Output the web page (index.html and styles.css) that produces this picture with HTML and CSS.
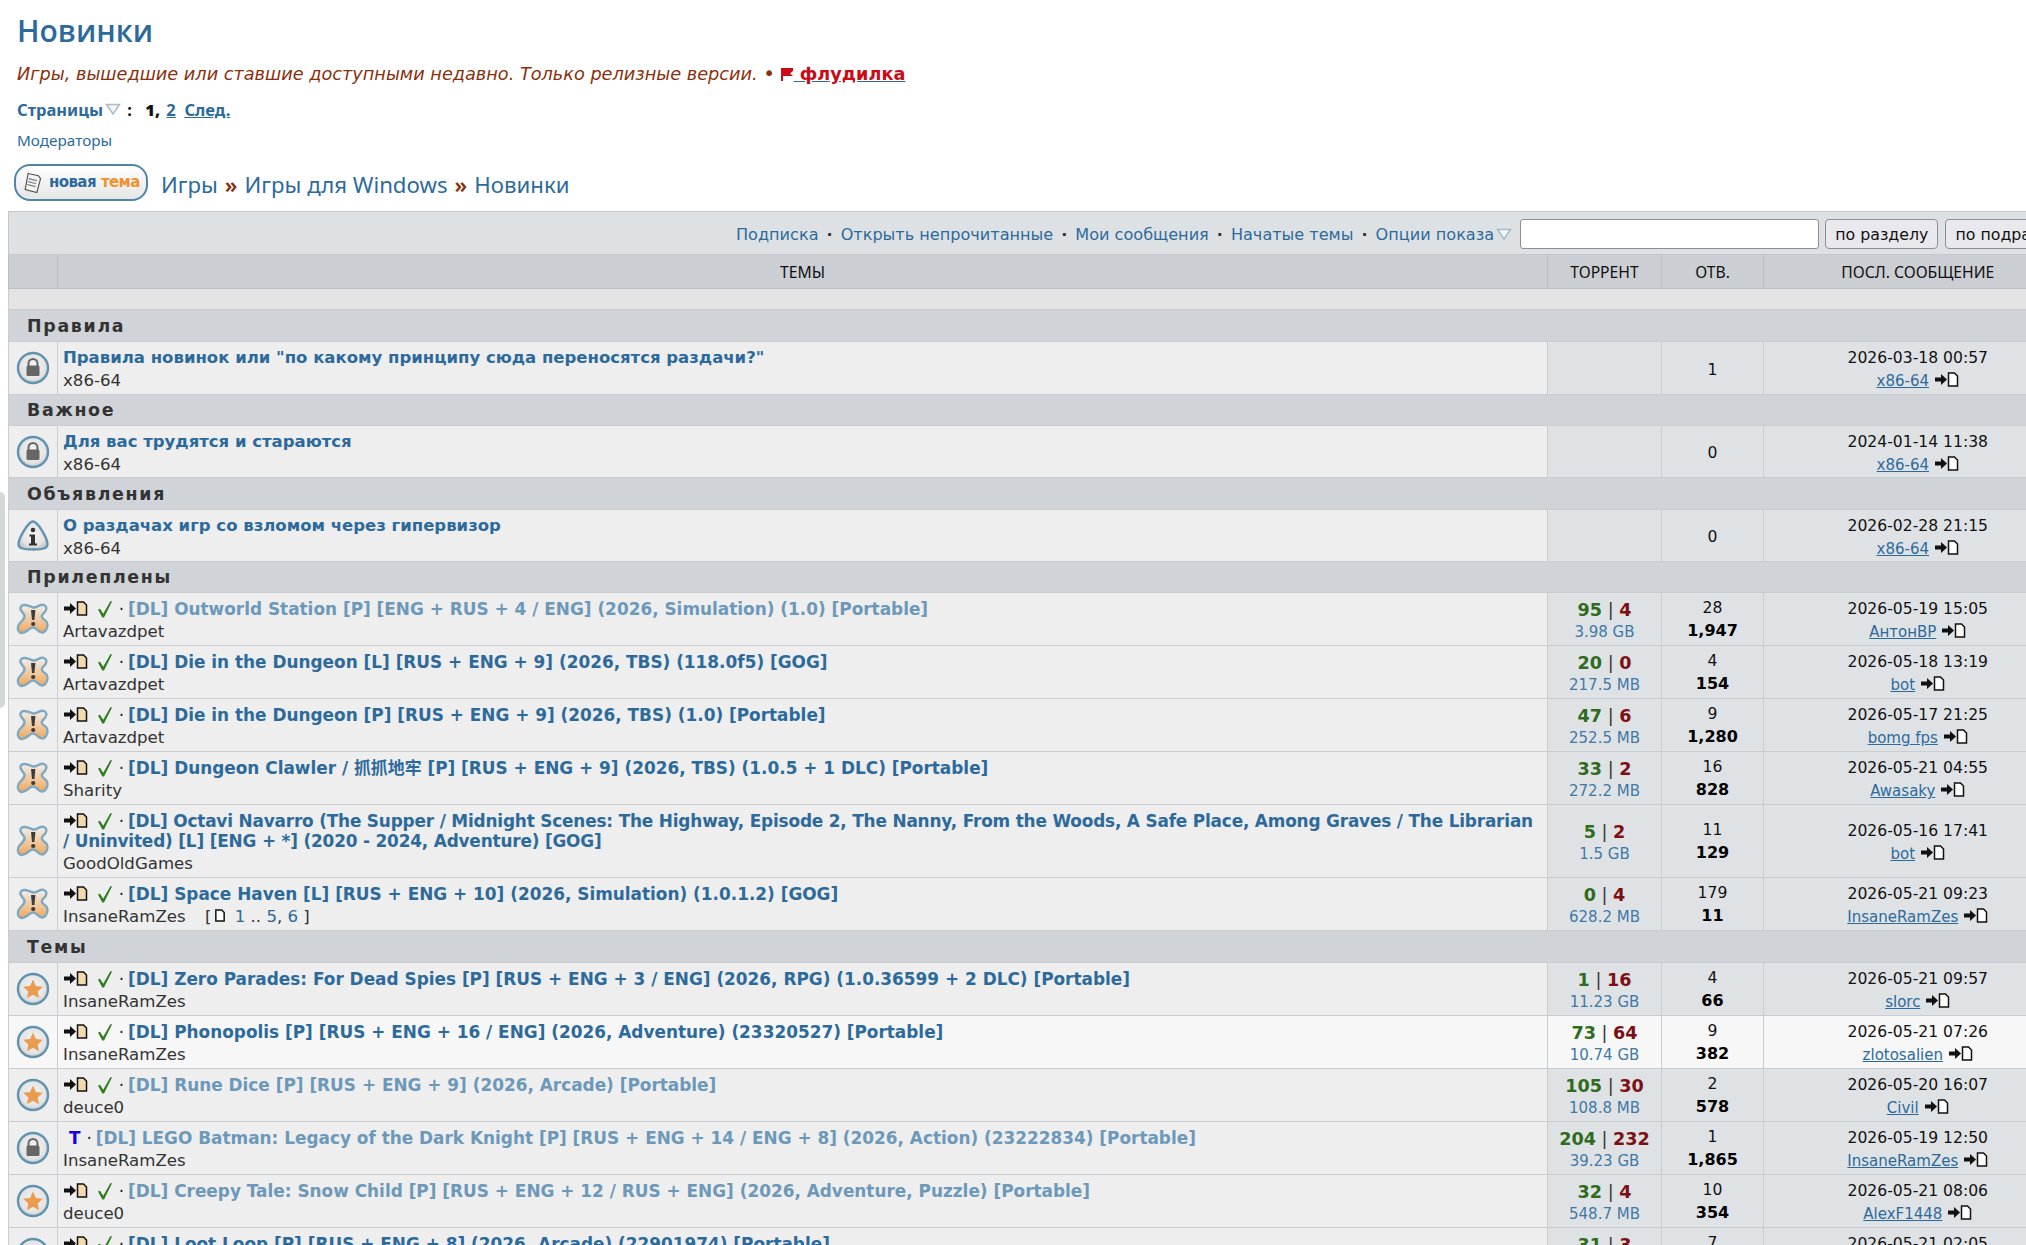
FILE: index.html
```html
<!DOCTYPE html>
<html lang="ru">
<head>
<meta charset="utf-8">
<title>Новинки</title>
<link rel="stylesheet" href="styles.css">
</head>
<body>
<svg class="defs" width="0" height="0" aria-hidden="true">
  <defs>
    <radialGradient id="disc" cx="50%" cy="45%" r="55%"><stop offset="0" stop-color="#f4f4f4"/><stop offset="0.75" stop-color="#e4e4e4"/><stop offset="1" stop-color="#c9c9c9"/></radialGradient>
    <linearGradient id="blob" x1="0" y1="0" x2="0" y2="1"><stop offset="0" stop-color="#f1efec"/><stop offset="1" stop-color="#f0a75a"/></linearGradient>
    <symbol id="i-lock" viewBox="0 0 34 34"><circle cx="17" cy="17" r="15" fill="url(#disc)" stroke="#5f93b0" stroke-width="2.4"/><path d="M12.5 15v-2.5a4.5 4.5 0 0 1 9 0V15" fill="none" stroke="#666" stroke-width="2"/><rect x="10.5" y="14.5" width="13" height="10.5" rx="1.5" fill="#666"/></symbol>
    <symbol id="i-star" viewBox="0 0 34 34"><circle cx="17" cy="17" r="15" fill="url(#disc)" stroke="#5f93b0" stroke-width="2.4"/><path d="M17 7.500l2.900 6.400 6.900.8-5.100 4.700 1.400 6.900-6.100-3.500-6.100 3.500 1.400-6.900-5.100-4.700 6.900-.8z" fill="#e99c4f"/></symbol>
    <symbol id="i-info" viewBox="0 0 34 34"><path d="M17 2.500C22 2.500 31.500 20 31.500 25c0 4-3.500 5.500-14.500 5.500S2.500 29 2.500 25C2.500 20 12 2.500 17 2.500z" fill="url(#disc)" stroke="#5f93b0" stroke-width="2.400"/><circle cx="17" cy="11" r="2.300" fill="#333"/><path d="M13.500 15.500h5.500v9h2v2h-8v-2h2v-7h-1.500z" fill="#333"/></symbol>
    <symbol id="i-sticky" viewBox="0 0 34 34"><path d="M6 3.500C9 1.500 13 4.500 17 5.500c4 .5 7-4 11-2.500 4 2 2.500 6-1 9-2.500 2-.5 5 3 7 3 3 1 10.500-3.500 11.500-4 .5-5.500-5-9.500-5s-6 5.500-11 5.500c-4 0-5.500-5.500-2.500-9.500 3-3 6.500-6 4.500-9C6.500 10 2 6.500 6 3.500z" fill="url(#blob)" stroke="#7fa9c2" stroke-width="2.400"/><path d="M15 8h4.400l-1 10h-2.400z" fill="#3c3c3c"/><circle cx="17.200" cy="22" r="2.100" fill="#3c3c3c"/></symbol>
    <symbol id="i-last" viewBox="0 0 25 15"><path d="M1 5.500h6V2l6 5.500-6 5.500V9.500H1z" fill="#111"/><path d="M14.500 1h6l3 3v10h-9z" fill="#fff" stroke="#111" stroke-width="1.500"/></symbol>
    <symbol id="i-new" viewBox="0 0 25 15"><path d="M1 5.500h6V2l6 5.500-6 5.500V9.500H1z" fill="#111"/><path d="M14.500 1h6l3 3v10h-9z" fill="#f3d9ae" stroke="#111" stroke-width="1.500"/></symbol>
    <symbol id="i-check" viewBox="0 0 16 18"><path d="M1 9.500l2-.8 3.200 5L13.500 1l1.500.5L7 17.500H5.300z" fill="#2f7d1f"/></symbol>
    <symbol id="i-drop" viewBox="0 0 16 12"><path d="M1.500 1.500h13L8 11z" fill="#f4f8fb" stroke="#a5bbca" stroke-width="1.500"/></symbol>
    <symbol id="i-doc" viewBox="0 0 12 15"><path d="M1 1h7l3 3v10H1z" fill="#fff" stroke="#111" stroke-width="1.800"/></symbol>
    <symbol id="i-note" viewBox="0 0 26 30"><path d="M7 2l14 3 3 4-5 19-16-4z" fill="#f2f2f2" stroke="#555" stroke-width="1.600"/><path d="M8 9l11 3M7 13l11 3M6 17l11 3" stroke="#777" stroke-width="1.600"/></symbol>
    <symbol id="i-flag" viewBox="0 0 12 13"><path d="M0 0h2v13H0zM2 0h10v3l-3 2.500L12 8H2z" fill="#cc0a16"/></symbol>
  </defs>
</svg>

<div class="side-handle"></div>

<header class="top">
  <h1 class="page-title">Новинки</h1>
  <p class="subtitle">Игры, вышедшие или ставшие доступными недавно. Только релизные версии. <span class="dot">•</span> <a class="flood" href="#"><svg class="flag"><use href="#i-flag"/></svg> флудилка</a></p>
  <p class="pages"><span class="pages-label">Страницы</span><svg class="drop"><use href="#i-drop"/></svg> : <b class="cur">1,</b> <a href="#">2</a> &nbsp;<a href="#">След.</a></p>
  <p class="mods"><a href="#">Модераторы</a></p>
  <div class="crumbs">
    <a class="new-topic" href="#"><svg class="note"><use href="#i-note"/></svg><span class="nt-a">новая</span><span class="nt-b">тема</span></a>
    <span class="path"><a href="#">Игры</a><span class="sep">»</span><a href="#">Игры для Windows</a><span class="sep">»</span><a href="#">Новинки</a></span>
  </div>
</header>

<table class="forum">
  <colgroup><col class="c-icon"><col class="c-title"><col class="c-tor"><col class="c-rep"><col class="c-last"></colgroup>
  <thead>
    <tr><td colspan="5" class="toolbar"><div class="tools">
      <a href="#">Подписка</a><i>·</i><a href="#">Открыть непрочитанные</a><i>·</i><a href="#">Мои сообщения</a><i>·</i><a href="#">Начатые темы</a><i>·</i><a href="#">Опции показа</a><svg class="drop"><use href="#i-drop"/></svg>
      <input class="q" type="text" aria-label="Поиск"><button>по разделу</button><button>по подразделу</button>
    </div></td></tr>
    <tr class="heads"><th></th><th>ТЕМЫ</th><th>ТОРРЕНТ</th><th>ОТВ.</th><th>ПОСЛ. СООБЩЕНИЕ</th></tr>
    <tr class="gap"><td colspan="5"></td></tr>
  </thead>
  <tbody>
    <tr class="sect tall"><td colspan="5">Правила</td></tr>
    <tr><td class="ic"><svg class="ico"><use href="#i-lock"/></svg></td><td class="tt"><div class="name ru"><a href="#">Правила новинок или "по какому принципу сюда переносятся раздачи?"</a></div><div class="who">x86-64</div></td><td class="tor"></td><td class="rep"><span>1</span></td><td class="last"><div>2026-03-18 00:57</div><div><a href="#">x86-64</a> <svg class="gl"><use href="#i-last"/></svg></div></td></tr>
    <tr class="sect"><td colspan="5">Важное</td></tr>
    <tr class="short"><td class="ic"><svg class="ico"><use href="#i-lock"/></svg></td><td class="tt"><div class="name ru"><a href="#">Для вас трудятся и стараются</a></div><div class="who">x86-64</div></td><td class="tor"></td><td class="rep"><span>0</span></td><td class="last"><div>2024-01-14 11:38</div><div><a href="#">x86-64</a> <svg class="gl"><use href="#i-last"/></svg></div></td></tr>
    <tr class="sect tall"><td colspan="5">Объявления</td></tr>
    <tr class="short"><td class="ic"><svg class="ico"><use href="#i-info"/></svg></td><td class="tt"><div class="name ru"><a href="#">О раздачах игр со взломом через гипервизор</a></div><div class="who">x86-64</div></td><td class="tor"></td><td class="rep"><span>0</span></td><td class="last"><div>2026-02-28 21:15</div><div><a href="#">x86-64</a> <svg class="gl"><use href="#i-last"/></svg></div></td></tr>
    <tr class="sect"><td colspan="5">Прилеплены</td></tr>
    <tr><td class="ic"><svg class="ico"><use href="#i-sticky"/></svg></td><td class="tt"><div class="name"><svg class="gl"><use href="#i-new"/></svg> <svg class="ok"><use href="#i-check"/></svg> <i>·</i> <a class="seen" href="#">[DL] Outworld Station [P] [ENG + RUS + 4 / ENG] (2026, Simulation) (1.0) [Portable]</a></div><div class="who">Artavazdpet</div></td><td class="tor"><div><b class="s">95</b> | <b class="l">4</b></div><div class="sz">3.98 GB</div></td><td class="rep"><span>28</span><b>1,947</b></td><td class="last"><div>2026-05-19 15:05</div><div><a href="#">АнтонВР</a> <svg class="gl"><use href="#i-last"/></svg></div></td></tr>
    <tr><td class="ic"><svg class="ico"><use href="#i-sticky"/></svg></td><td class="tt"><div class="name"><svg class="gl"><use href="#i-new"/></svg> <svg class="ok"><use href="#i-check"/></svg> <i>·</i> <a href="#">[DL] Die in the Dungeon [L] [RUS + ENG + 9] (2026, TBS) (118.0f5) [GOG]</a></div><div class="who">Artavazdpet</div></td><td class="tor"><div><b class="s">20</b> | <b class="l">0</b></div><div class="sz">217.5 MB</div></td><td class="rep"><span>4</span><b>154</b></td><td class="last"><div>2026-05-18 13:19</div><div><a href="#">bot</a> <svg class="gl"><use href="#i-last"/></svg></div></td></tr>
    <tr><td class="ic"><svg class="ico"><use href="#i-sticky"/></svg></td><td class="tt"><div class="name"><svg class="gl"><use href="#i-new"/></svg> <svg class="ok"><use href="#i-check"/></svg> <i>·</i> <a href="#">[DL] Die in the Dungeon [P] [RUS + ENG + 9] (2026, TBS) (1.0) [Portable]</a></div><div class="who">Artavazdpet</div></td><td class="tor"><div><b class="s">47</b> | <b class="l">6</b></div><div class="sz">252.5 MB</div></td><td class="rep"><span>9</span><b>1,280</b></td><td class="last"><div>2026-05-17 21:25</div><div><a href="#">bomg fps</a> <svg class="gl"><use href="#i-last"/></svg></div></td></tr>
    <tr><td class="ic"><svg class="ico"><use href="#i-sticky"/></svg></td><td class="tt"><div class="name"><svg class="gl"><use href="#i-new"/></svg> <svg class="ok"><use href="#i-check"/></svg> <i>·</i> <a href="#">[DL] Dungeon Clawler / 抓抓地牢 [P] [RUS + ENG + 9] (2026, TBS) (1.0.5 + 1 DLC) [Portable]</a></div><div class="who">Sharity</div></td><td class="tor"><div><b class="s">33</b> | <b class="l">2</b></div><div class="sz">272.2 MB</div></td><td class="rep"><span>16</span><b>828</b></td><td class="last"><div>2026-05-21 04:55</div><div><a href="#">Awasaky</a> <svg class="gl"><use href="#i-last"/></svg></div></td></tr>
    <tr><td class="ic"><svg class="ico"><use href="#i-sticky"/></svg></td><td class="tt"><div class="name"><svg class="gl"><use href="#i-new"/></svg> <svg class="ok"><use href="#i-check"/></svg> <i>·</i> <a class="tight" href="#">[DL] Octavi Navarro (The Supper / Midnight Scenes: The Highway, Episode 2, The Nanny, From the Woods, A Safe Place, Among Graves / The Librarian / Uninvited) [L] [ENG + *] (2020 - 2024, Adventure) [GOG]</a></div><div class="who">GoodOldGames</div></td><td class="tor"><div><b class="s">5</b> | <b class="l">2</b></div><div class="sz">1.5 GB</div></td><td class="rep"><span>11</span><b>129</b></td><td class="last"><div>2026-05-16 17:41</div><div><a href="#">bot</a> <svg class="gl"><use href="#i-last"/></svg></div></td></tr>
    <tr><td class="ic"><svg class="ico"><use href="#i-sticky"/></svg></td><td class="tt"><div class="name"><svg class="gl"><use href="#i-new"/></svg> <svg class="ok"><use href="#i-check"/></svg> <i>·</i> <a href="#">[DL] Space Haven [L] [RUS + ENG + 10] (2026, Simulation) (1.0.1.2) [GOG]</a></div><div class="who">InsaneRamZes <span class="tp">[<svg class="dc"><use href="#i-doc"/></svg> <a href="#">1</a> .. <a href="#">5</a>, <a href="#">6</a> ]</span></div></td><td class="tor"><div><b class="s">0</b> | <b class="l">4</b></div><div class="sz">628.2 MB</div></td><td class="rep"><span>179</span><b>11</b></td><td class="last"><div>2026-05-21 09:23</div><div><a href="#">InsaneRamZes</a> <svg class="gl"><use href="#i-last"/></svg></div></td></tr>
    <tr class="sect tall"><td colspan="5">Темы</td></tr>
    <tr><td class="ic"><svg class="ico"><use href="#i-star"/></svg></td><td class="tt"><div class="name"><svg class="gl"><use href="#i-new"/></svg> <svg class="ok"><use href="#i-check"/></svg> <i>·</i> <a href="#">[DL] Zero Parades: For Dead Spies [P] [RUS + ENG + 3 / ENG] (2026, RPG) (1.0.36599 + 2 DLC) [Portable]</a></div><div class="who">InsaneRamZes</div></td><td class="tor"><div><b class="s">1</b> | <b class="l">16</b></div><div class="sz">11.23 GB</div></td><td class="rep"><span>4</span><b>66</b></td><td class="last"><div>2026-05-21 09:57</div><div><a href="#">slorc</a> <svg class="gl"><use href="#i-last"/></svg></div></td></tr>
    <tr class="lit"><td class="ic"><svg class="ico"><use href="#i-star"/></svg></td><td class="tt"><div class="name"><svg class="gl"><use href="#i-new"/></svg> <svg class="ok"><use href="#i-check"/></svg> <i>·</i> <a href="#">[DL] Phonopolis [P] [RUS + ENG + 16 / ENG] (2026, Adventure) (23320527) [Portable]</a></div><div class="who">InsaneRamZes</div></td><td class="tor"><div><b class="s">73</b> | <b class="l">64</b></div><div class="sz">10.74 GB</div></td><td class="rep"><span>9</span><b>382</b></td><td class="last"><div>2026-05-21 07:26</div><div><a href="#">zlotosalien</a> <svg class="gl"><use href="#i-last"/></svg></div></td></tr>
    <tr><td class="ic"><svg class="ico"><use href="#i-star"/></svg></td><td class="tt"><div class="name"><svg class="gl"><use href="#i-new"/></svg> <svg class="ok"><use href="#i-check"/></svg> <i>·</i> <a class="seen" href="#">[DL] Rune Dice [P] [RUS + ENG + 9] (2026, Arcade) [Portable]</a></div><div class="who">deuce0</div></td><td class="tor"><div><b class="s">105</b> | <b class="l">30</b></div><div class="sz">108.8 MB</div></td><td class="rep"><span>2</span><b>578</b></td><td class="last"><div>2026-05-20 16:07</div><div><a href="#">Civil</a> <svg class="gl"><use href="#i-last"/></svg></div></td></tr>
    <tr><td class="ic"><svg class="ico"><use href="#i-lock"/></svg></td><td class="tt"><div class="name"><b class="tm">T</b> <i>·</i> <a class="seen" href="#">[DL] LEGO Batman: Legacy of the Dark Knight [P] [RUS + ENG + 14 / ENG + 8] (2026, Action) (23222834) [Portable]</a></div><div class="who">InsaneRamZes</div></td><td class="tor"><div><b class="s">204</b> | <b class="l">232</b></div><div class="sz">39.23 GB</div></td><td class="rep"><span>1</span><b>1,865</b></td><td class="last"><div>2026-05-19 12:50</div><div><a href="#">InsaneRamZes</a> <svg class="gl"><use href="#i-last"/></svg></div></td></tr>
    <tr><td class="ic"><svg class="ico"><use href="#i-star"/></svg></td><td class="tt"><div class="name"><svg class="gl"><use href="#i-new"/></svg> <svg class="ok"><use href="#i-check"/></svg> <i>·</i> <a class="seen" href="#">[DL] Creepy Tale: Snow Child [P] [RUS + ENG + 12 / RUS + ENG] (2026, Adventure, Puzzle) [Portable]</a></div><div class="who">deuce0</div></td><td class="tor"><div><b class="s">32</b> | <b class="l">4</b></div><div class="sz">548.7 MB</div></td><td class="rep"><span>10</span><b>354</b></td><td class="last"><div>2026-05-21 08:06</div><div><a href="#">AlexF1448</a> <svg class="gl"><use href="#i-last"/></svg></div></td></tr>
    <tr><td class="ic"><svg class="ico"><use href="#i-star"/></svg></td><td class="tt"><div class="name"><svg class="gl"><use href="#i-new"/></svg> <svg class="ok"><use href="#i-check"/></svg> <i>·</i> <a href="#">[DL] Loot Loop [P] [RUS + ENG + 8] (2026, Arcade) (22901974) [Portable]</a></div><div class="who">&nbsp;</div></td><td class="tor"><div><b class="s">31</b> | <b class="l">3</b></div><div class="sz">&nbsp;</div></td><td class="rep"><span>7</span><b>&nbsp;</b></td><td class="last"><div>2026-05-21 02:05</div><div>&nbsp;</div></td></tr>
  </tbody>
</table>
</body>
</html>
```

FILE: styles.css
```css
html, body { margin: 0; height: 100%; overflow: hidden; background: #fff; }
body { font-family: "DejaVu Sans", Verdana, "Noto Sans CJK SC", sans-serif; font-size: 14px; color: #222; }
a { color: #2d6a9c; }
.defs { position: absolute; }

.side-handle { position: absolute; left: 0; top: 492px; width: 5px; height: 216px; background: #d3d8db; border-radius: 0 6px 6px 0; }

.top { padding: 0 0 0 17px; height: 211px; box-sizing: border-box; }
.page-title { margin: 0; padding-top: 10px; font: 600 30px/42px "Open Sans", sans-serif; color: #2d6a9c; }
.subtitle { margin: 11px 0 0; font-size: 17.700px; line-height: 22px; font-style: italic; color: #8a2f0b; }
.dot { font-style: normal; font-size: 20px; line-height: 1; color: #8a2f0b; }
.flood { color: #cc0a16; font-weight: 700; font-style: normal; text-decoration-color: #2d6a9c; }
.flag { width: 12px; height: 13px; margin-right: 1px; vertical-align: -1px; }
.pages { margin: 15px 0 0; font: 700 16.500px/20px "Noto Sans", sans-serif; color: #111; }
.pages-label { color: #2d6a9c; }
.pages a { color: #2d6a9c; }
.pages .drop { margin: 0 2px; }
.cur { margin-left: 9px; margin-right: 2px; }
.drop { flex: none; width: 16px; height: 12px; vertical-align: 1px; }
.mods { margin: 10px 0 0; font: 400 15.300px/20px "Noto Sans", sans-serif; }
.mods a { text-decoration: none; }
.crumbs { display: flex; align-items: flex-start; margin: 14px 0 0 -3px; font: 400 22.200px/30px "Noto Sans", sans-serif; }
.crumbs a { text-decoration: none; color: #2d6a9c; }
.path { display: block; margin-top: 6px; }
.sep { margin: 0 7px; color: #8a2f0b; font-weight: 600; }
.crumbs .new-topic { display: flex; align-items: center; flex: none; box-sizing: border-box; width: 134px; height: 37px; margin-right: 13px; padding-left: 7px; border: 2px solid #4d86a8; border-radius: 16px; background: linear-gradient(#fff, #e6e6e6); font: 700 15px/1 "DejaVu Sans", sans-serif; letter-spacing: -0.6px; }
.note { flex: none; width: 19px; height: 24px; margin-right: 7px; }
.nt-a { color: #2d6a9c; margin-right: 5px; }
.nt-b { color: #ee9230; }

.forum { table-layout: fixed; width: 2063px; margin-left: 8px; border-collapse: collapse; }
.c-icon { width: 49px; }
.c-title { width: 1490px; }
.c-tor { width: 114px; }
.c-rep { width: 102px; }
.c-last { width: 308px; }
.forum td, .forum th { padding: 0; border: 1px solid #c9cdd2; border-right: 0; }

.toolbar { height: 42px; background: #dee1e4; }
.tools { display: flex; align-items: center; padding: 2px 0 0 727px; white-space: nowrap; font-size: 16.100px; color: #333; }
.tools a { text-decoration: none; }
.tools i { margin: 0 8px; font-style: normal; font-weight: 700; }
.tools .drop { margin-left: 2px; }
.q { flex: none; box-sizing: border-box; width: 299px; height: 30px; margin: 0 6px 0 8px; border: 1px solid #8e8e96; border-radius: 3px; background: #fff; }
button { flex: none; box-sizing: border-box; height: 30px; margin-right: 7px; padding: 0 9px; border: 1px solid #8e8e96; border-radius: 4px; background: #e9e9ed; font: 400 15.800px "DejaVu Sans", sans-serif; color: #111; }

.forum .heads th { height: 32px; padding-top: 1px; border-color: #b9bfc5; background: #cbced3; font: 400 15.700px "Noto Sans", sans-serif; color: #111; }
.forum .toolbar { border-color: #c4c8cd; }
.gap td { height: 20px; background: #e4e4e4; }
.forum .sect td { height: 30px; padding-left: 18px; background: #d0d3d8; font-size: 17.400px; font-weight: 700; letter-spacing: 1.700px; color: #333; }
.forum .sect.tall td { height: 31px; }

.ic, .tt { background: #eee; }
.ic { text-align: center; vertical-align: middle; }
.ico { display: block; width: 34px; height: 34px; margin: 0 auto; }
.forum .tt { padding: 6px 7px 0 5px; vertical-align: top; }
.name { font-size: 16.900px; line-height: 20px; font-weight: 700; color: #222; }
.name.ru { font-size: 16.500px; }
.name a { color: #2d6a9c; text-decoration: none; }
.name a.seen { color: #6c98ba; }
.name a.tight { letter-spacing: -0.18px; }
.name i { margin-right: -2px; font-style: normal; font-weight: 400; }
.who { margin-top: 1px; height: 25px; font-size: 16.600px; line-height: 24px; color: #333; }
.short .who { height: 24px; }
.tp { margin-left: 14px; }
.tp a { text-decoration: none; }
.gl { width: 25px; height: 15px; vertical-align: -1px; }
.ok { width: 16px; height: 18px; margin-left: 3px; vertical-align: -3px; }
.dc { width: 10px; height: 13px; vertical-align: 0; margin: 0 4px 0 4px; }
.tm { color: #1a00e0; margin-left: 6px; }

.tor, .rep, .last { background: #dfe2e5; text-align: center; vertical-align: middle; }
.forum .tor, .forum .last { padding-top: 4px; }
.forum .rep { padding-top: 3px; }
.tor { line-height: 22px; font-size: 17.600px; color: #333; }
.tor .s { color: #2f6b1c; }
.tor .l { color: #7c0f14; }
.sz { font-size: 15px; line-height: 22px; color: #3f79a6; }
.rep span { display: block; line-height: 20px; font-size: 15.600px; color: #111; }
.rep b { display: block; line-height: 25px; font-size: 16px; color: #000; }
.last { line-height: 23px; font-size: 15.600px; color: #111; }
.last a { font-size: 15px; }

.lit .ic, .lit .tt, .lit .tor, .lit .rep, .lit .last { background: #f7f7f7; }
```
